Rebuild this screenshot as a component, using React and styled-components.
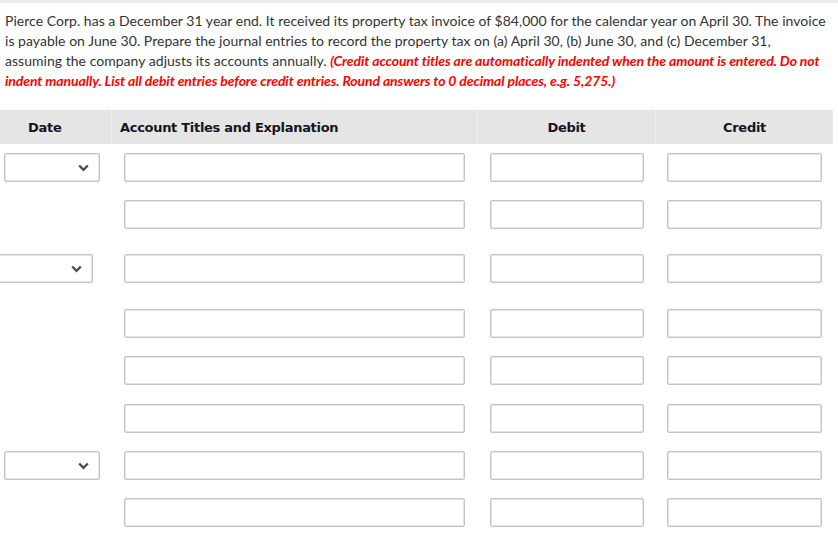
import React from 'react';
import styled, { createGlobalStyle } from "styled-components";

const Global = createGlobalStyle`
    html, body {
        margin: 0;
        padding: 0;
        background: #fff;
    }
    body {
        font-family: Lato, "Open Sans", sans-serif;
        color: #333;
    }
`;

const Page = styled.div`
    width: 838px;
    height: 546px;
    overflow: hidden;
    border-top: 3px solid #ececec;
    box-sizing: border-box;
`;

const Question = styled.p`
    margin: 8px 0 0 0;
    padding: 0 8px 0 5px;
    font-size: 14px;
    line-height: 20px;
    letter-spacing: 0.03px;
    color: #333;
`;

const Note = styled.span`
    color: #ff0000;
    font-weight: bold;
    font-style: italic;
    letter-spacing: -0.1px;
`;

const Table = styled.div`
    width: 833px;
    margin-top: 19px;
`;

const Header = styled.div`
    display: grid;
    grid-template-columns: 111px 366px 178px 178px;
    height: 34px;
    background: #e5e5e5;
`;

const HeadCell = styled.div`
    display: flex;
    align-items: center;
    justify-content: ${p => (p.$center ? 'center' : 'flex-start')};
    padding-left: ${p => p.$pad || 0}px;
    border-left: ${p => (p.$first ? 'none' : '1px solid #efefef')};
    font-family: "DejaVu Sans", Verdana, sans-serif;
    font-weight: bold;
    font-size: 13px;
    letter-spacing: -0.3px;
    color: #15151f;
`;

const Row = styled.div`
    display: grid;
    grid-template-columns: 111px 366px 178px 178px;
    height: 29px;
    margin-top: ${p => p.$gap}px;
`;

const Cell = styled.div`
    display: flex;
    padding-left: ${p => p.$left}px;
`;

const Field = styled.div`
    box-sizing: border-box;
    width: ${p => p.$w}px;
    height: 29px;
    border: 1px solid #c4c4c4;
    box-shadow: inset 0 0 0 1px #e4e4e4;
    border-radius: 2px;
    background: #fff;
`;

const Select = styled(Field)`
    display: flex;
    align-items: center;
    justify-content: flex-end;
    padding-right: 10px;
`;

const Chevron = () => (
    <svg width="11" height="8" viewBox="0 0 11 8">
        <path d="M1.2 1.5 L5.5 5.8 L9.8 1.5" fill="none" stroke="#4a4a4a" strokeWidth="2.4" />
    </svg>
);

// each row: gap above, date select offset (null = no select)
const rows = [
    { gap: 9, date: 4 },
    { gap: 18, date: null },
    { gap: 25, date: -3 },
    { gap: 26, date: null },
    { gap: 18, date: null },
    { gap: 19, date: null },
    { gap: 18, date: 4 },
    { gap: 18, date: null },
];

const App = () => (
    <Page>
        <Global />
        <Question>
            Pierce Corp. has a December 31 year end. It received its property tax invoice of $84,000 for the calendar year on April 30. The invoice is payable on June 30. Prepare the journal entries to record the property tax on (a) April 30, (b) June 30, and (c) December 31, assuming the company adjusts its accounts annually.{' '}
            <Note>(Credit account titles are automatically indented when the amount is entered. Do not indent manually. List all debit entries before credit entries. Round answers to 0 decimal places, e.g. 5,275.)</Note>
        </Question>
        <Table>
            <Header>
                <HeadCell $first $pad={28}>Date</HeadCell>
                <HeadCell $pad={8}>Account Titles and Explanation</HeadCell>
                <HeadCell $center>Debit</HeadCell>
                <HeadCell $center>Credit</HeadCell>
            </Header>
            {rows.map((r, i) => (
                <Row key={i} $gap={r.gap}>
                    <Cell $left={0}>
                        {r.date !== null && (
                            <Select $w={96} style={{ marginLeft: r.date }}>
                                <Chevron />
                            </Select>
                        )}
                    </Cell>
                    <Cell $left={13}><Field $w={341} /></Cell>
                    <Cell $left={13}><Field $w={154} /></Cell>
                    <Cell $left={12}><Field $w={155} /></Cell>
                </Row>
            ))}
        </Table>
    </Page>
);

export default App;
